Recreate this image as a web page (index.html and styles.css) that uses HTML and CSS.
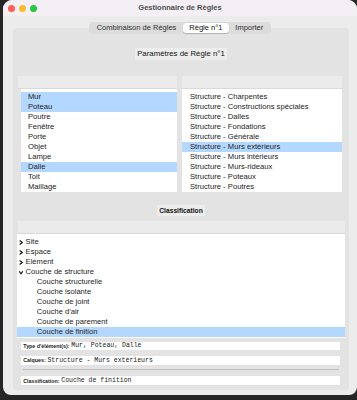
FILE: index.html
```html
<!DOCTYPE html>
<html lang="fr">
<head>
<meta charset="utf-8">
<link rel="stylesheet" href="styles.css">
</head>
<body>
<div class="window">
  <div class="titlebar">
    <div class="lights">
      <span class="light red"></span>
      <span class="light yellow"></span>
      <span class="light green"></span>
    </div>
    <div class="title">Gestionnaire de Règles</div>
    <div></div>
  </div>
  <div class="tabs">
    <div class="seg">
      <span class="seg-item">Combinaison de Règles</span>
      <span class="seg-item active">Règle n°1</span>
      <span class="seg-item">Importer</span>
    </div>
  </div>
  <div class="group">
    <div class="caption"><span class="caption-box">Paramètres de Règle n°1</span></div>
    <div class="lists">
      <div class="panel panel-left">
        <div class="panel-head"></div>
        <ul class="list list-left">
          <li class="sel">Mur</li>
          <li class="sel">Poteau</li>
          <li>Poutre</li>
          <li>Fenêtre</li>
          <li>Porte</li>
          <li>Objet</li>
          <li>Lampe</li>
          <li class="sel">Dalle</li>
          <li>Toit</li>
          <li>Maillage</li>
        </ul>
      </div>
      <div class="panel panel-right">
        <div class="panel-head"></div>
        <ul class="list list-right">
          <li>Structure - Charpentes</li>
          <li>Structure - Constructions spéciales</li>
          <li>Structure - Dalles</li>
          <li>Structure - Fondations</li>
          <li>Structure - Générale</li>
          <li class="sel">Structure - Murs extérieurs</li>
          <li>Structure - Murs intérieurs</li>
          <li>Structure - Murs-rideaux</li>
          <li>Structure - Poteaux</li>
          <li>Structure - Poutres</li>
        </ul>
      </div>
    </div>
    <div class="caption caption-classif"><span class="caption-box bold">Classification</span></div>
    <div class="panel tree-panel">
      <div class="panel-head"></div>
      <ul class="list tree">
        <li><svg class="chev" viewBox="0 0 4 5"><path d="M0.6 0.5 L3.3 2.5 L0.6 4.5" /></svg><span>Site</span></li>
        <li><svg class="chev" viewBox="0 0 4 5"><path d="M0.6 0.5 L3.3 2.5 L0.6 4.5" /></svg><span>Espace</span></li>
        <li><svg class="chev" viewBox="0 0 4 5"><path d="M0.6 0.5 L3.3 2.5 L0.6 4.5" /></svg><span>Elément</span></li>
        <li><svg class="chev" viewBox="0 0 4 5"><path d="M0.2 1.2 L2 3.8 L3.8 1.2" /></svg><span>Couche de structure</span></li>
        <li class="child">Couche structurelle</li>
        <li class="child">Couche isolante</li>
        <li class="child">Couche de joint</li>
        <li class="child">Couche d'air</li>
        <li class="child">Couche de parement</li>
        <li class="child sel">Couche de finition</li>
      </ul>
    </div>
    <div class="fields">
      <div class="field"><span class="lbl">Type d'élément(s):</span><span class="val">Mur, Poteau, Dalle</span></div>
      <div class="field field-2"><span class="lbl">Calques:</span><span class="val">Structure - Murs extérieurs</span></div>
      <div class="sep"></div>
      <div class="field field-3"><span class="lbl">Classification:</span><span class="val">Couche de finition</span></div>
    </div>
  </div>
</div>
</body>
</html>
```
FILE: styles.css
```css
html, body {
  margin: 0;
  padding: 0;
}
body {
  width: 357px;
  height: 400px;
  overflow: hidden;
  background: #262626;
  font-family: "Liberation Sans", Arial, sans-serif;
  color: #1d1d1d;
}
.window {
  margin-left: 3px;
  width: 354px;
  height: 395px;
  background: #ececec;
  border-radius: 9px 9px 8px 8px;
  overflow: hidden;
  display: flex;
  flex-direction: column;
}
.titlebar {
  height: 16px;
  flex: none;
  background: #f3eff5;
  display: grid;
  grid-template-columns: 1fr auto 1fr;
  align-items: center;
}
.lights {
  display: flex;
  gap: 4px;
  padding-left: 4.5px;
}
.light {
  width: 7px;
  height: 7px;
  border-radius: 50%;
}
.red { background: #fe5f57; }
.yellow { background: #febc2e; }
.green { background: #28c840; }
.title {
  font-size: 7.5px;
  font-weight: bold;
  color: #4d4d4d;
  line-height: 10px;
}
.tabs {
  display: flex;
  justify-content: center;
  margin-top: 5.5px;
  margin-bottom: -6px;
  position: relative;
  z-index: 1;
  flex: none;
}
.seg {
  display: flex;
  background: #dcdcdc;
  border-radius: 4px;
  padding: 1px;
}
.seg-item {
  padding: 0 6.5px;
  font-size: 7.5px;
  line-height: 10px;
  color: #2e2e2e;
  border-radius: 3px;
}
.seg-item.active {
  background: #ffffff;
  box-shadow: 0 0.5px 1px rgba(0, 0, 0, 0.2);
  color: #111;
}
.group {
  flex: 1;
  margin: 0 8px 5px 10px;
  background: #e3e3e3;
  border-radius: 4px;
  padding-top: 20.5px;
  display: flex;
  flex-direction: column;
}
.caption {
  display: flex;
  justify-content: center;
}
.caption-box {
  background: #ededed;
  font-size: 7.8px;
  line-height: 12px;
  padding: 0 2.5px;
  color: #111;
}
.caption-box.bold {
  font-weight: bold;
  font-size: 6.7px;
  line-height: 11px;
  padding: 0 2px;
}
.caption-classif {
  margin-top: 13px;
}
.lists {
  display: flex;
  gap: 5px;
  margin: 16px 7px 0 5px;
}
.panel-left {
  width: 159px;
  flex: none;
}
.panel-right {
  flex: 1;
}
.panel-head {
  height: 12px;
  background: #ebebeb;
  border-bottom: 1px solid #d9d9d9;
}
.list {
  list-style: none;
  margin: 0;
  padding: 3px 0 0 0;
  background: #ffffff;
  height: 103px;
  box-sizing: border-box;
}
.list li {
  height: 10px;
  line-height: 10px;
  font-size: 7.65px;
  color: #1d1d1d;
  white-space: nowrap;
}
.list-left {
  margin-left: 2.5px;
}
.list-left li {
  padding-left: 7.5px;
}
.list-right li {
  padding-left: 8px;
}
.list li.sel {
  background: #b3d7ff;
}
.tree-panel {
  margin: 5px 4px 0 5px;
}
.tree {
  height: 104px;
  padding-top: 3px;
  margin-left: -0.7px;
}
.tree li {
  display: flex;
  align-items: center;
  gap: 2.5px;
  padding-left: 1.8px;
  font-size: 7.6px;
}
.tree li.child {
  padding-left: 19.4px;
}
.chev {
  width: 4px;
  height: 5px;
  flex: none;
}
.chev path {
  fill: none;
  stroke: #111;
  stroke-width: 1.1;
}
.fields {
  margin: 3.5px 9px 0 8px;
  display: flex;
  flex-direction: column;
}
.field {
  background: #ffffff;
  height: 8.6px;
  display: flex;
  align-items: center;
  padding-left: 2.3px;
  white-space: nowrap;
}
.field-2 {
  margin-top: 5.6px;
  height: 9px;
}
.field-3 {
  margin-top: 6.5px;
  height: 9px;
}
.lbl {
  font-weight: bold;
  font-size: 5.3px;
  margin-right: 1.8px;
  color: #1a1a1a;
}
.val {
  font-family: "Liberation Mono", "Courier New", monospace;
  font-size: 6.5px;
  color: #1a1a1a;
}
.sep {
  height: 1px;
  background: #bdbdbd;
  margin: 4px 1px 0 2px;
}
```
